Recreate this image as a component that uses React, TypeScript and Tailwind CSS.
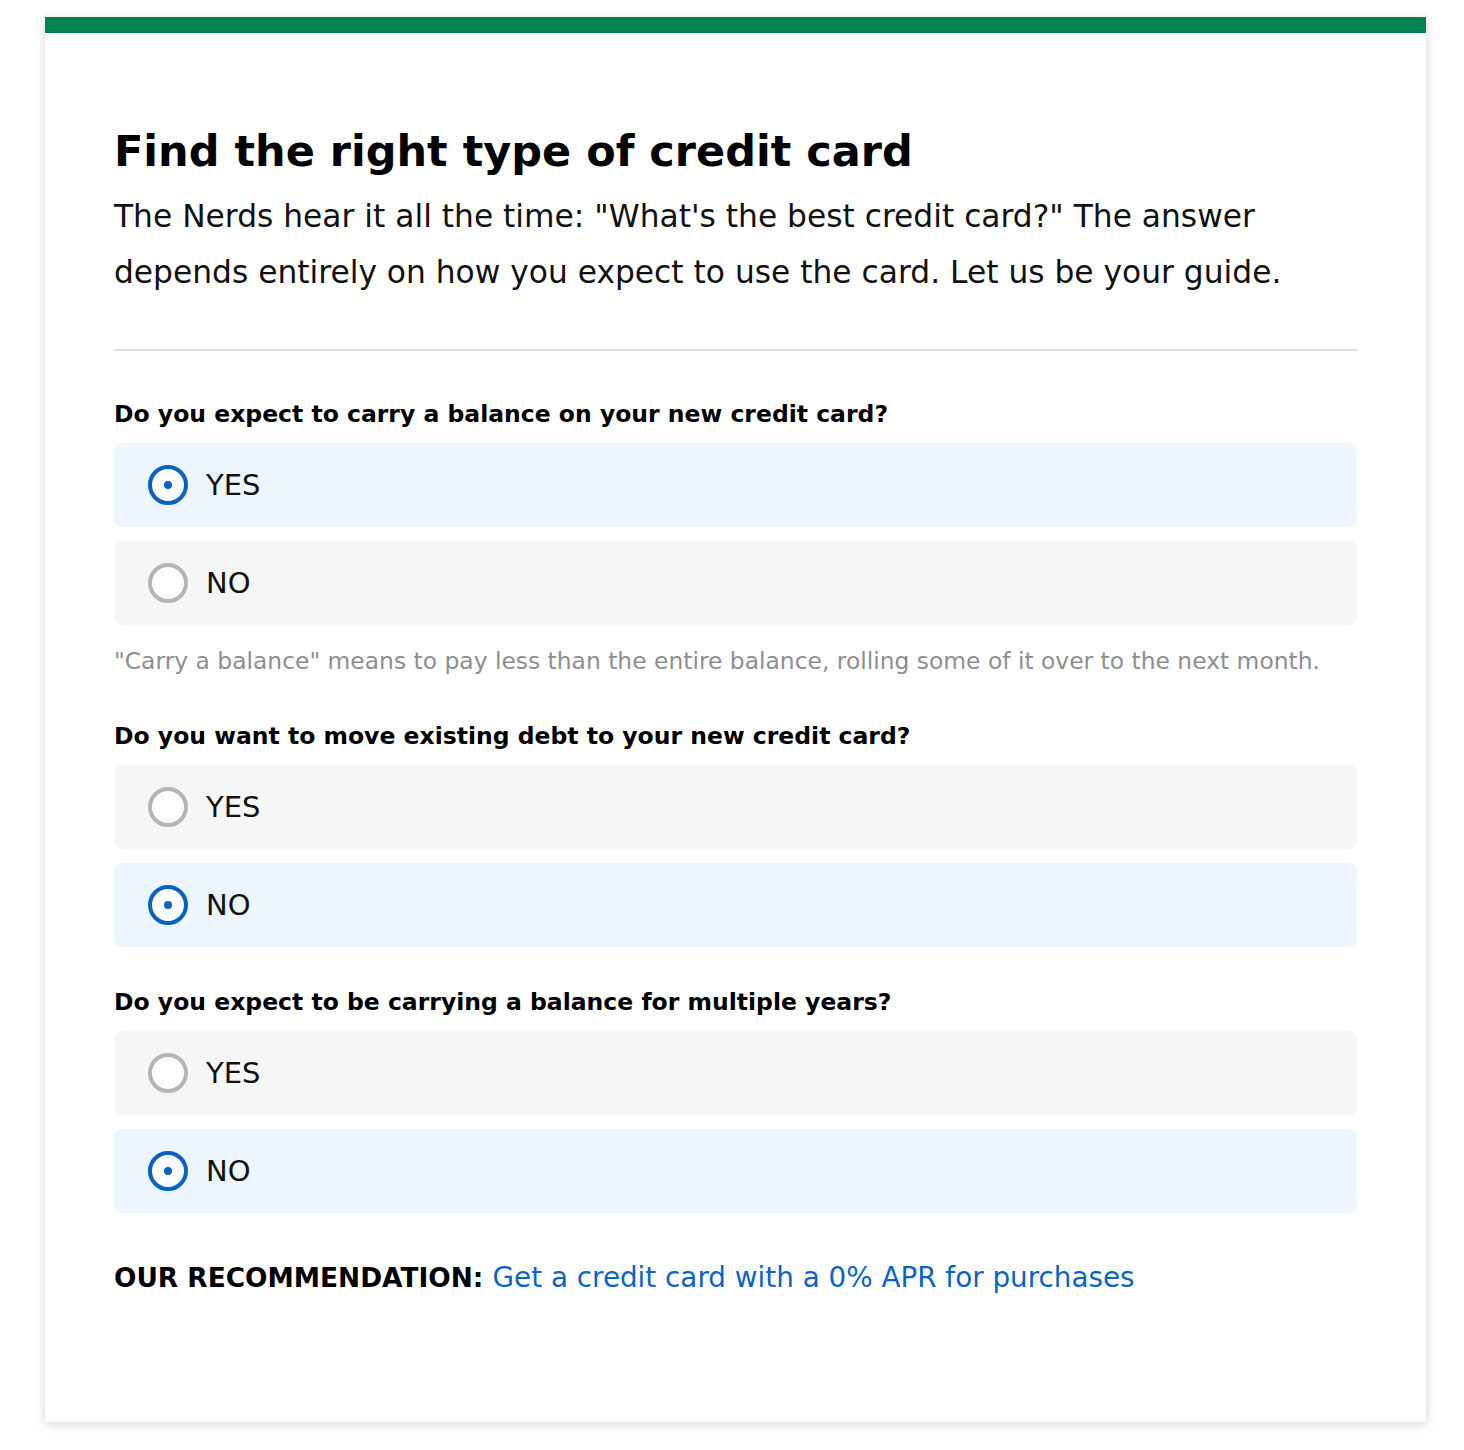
import React, { useState } from 'react';

const FONT = { fontFamily: '"DejaVu Sans", "Open Sans", Arial, sans-serif' };

type Question = { id: string; text: string; answer: 'yes' | 'no'; note?: string };

const QUESTIONS: Question[] = [
  {
    id: 'carry',
    text: 'Do you expect to carry a balance on your new credit card?',
    answer: 'yes',
    note: '"Carry a balance" means to pay less than the entire balance, rolling some of it over to the next month.',
  },
  { id: 'transfer', text: 'Do you want to move existing debt to your new credit card?', answer: 'no' },
  { id: 'years', text: 'Do you expect to be carrying a balance for multiple years?', answer: 'no' },
];

function Radio({ checked }: { checked: boolean }) {
  return (
    <span
      className={
        checked
          ? 'flex h-10 w-10 shrink-0 items-center justify-center rounded-full border-4 border-[#0862c4] bg-white'
          : 'flex h-10 w-10 shrink-0 items-center justify-center rounded-full border-4 border-[#b5b5b5] bg-white'
      }
    >
      {checked && <span className="h-2 w-2 rounded-full bg-[#0862c4]" />}
    </span>
  );
}

function Option({ label, checked, onClick }: { label: string; checked: boolean; onClick: () => void }) {
  return (
    <button
      type="button"
      onClick={onClick}
      className={
        checked
          ? 'flex h-[84px] w-full items-center gap-[18px] rounded-lg bg-[#edf5fe] pl-[34px] text-left'
          : 'flex h-[84px] w-full items-center gap-[18px] rounded-lg bg-[#f6f6f6] pl-[34px] text-left'
      }
    >
      <Radio checked={checked} />
      <span className="text-[29px] leading-8 text-[#111]">{label}</span>
    </button>
  );
}

export default function App() {
  const [answers, setAnswers] = useState<Record<string, 'yes' | 'no'>>(
    Object.fromEntries(QUESTIONS.map(q => [q.id, q.answer]))
  );

  return (
    <div className="min-h-screen bg-white pt-[17px] pb-[28px]" style={FONT}>
      <div className="ml-[45px] w-[1381px] bg-white shadow-[0_2px_10px_rgba(0,0,0,0.18)]">
        <div className="h-4 bg-[#038254]" />
        <div className="px-[69px] pt-[90px] pb-[128px]">
          <h2 className="text-[43px] font-bold leading-[56px] text-black">Find the right type of credit card</h2>
          <p className="mt-[9px] text-[31.3px] leading-[56px] text-[#111]">
            The Nerds hear it all the time: "What's the best credit card?" The answer depends entirely on how you
            expect to use the card. Let us be your guide.
          </p>
          <div className="mt-[49px] h-[2px] bg-[#dcdcdc]" />

          {QUESTIONS.map((q, i) => (
            <div key={q.id} className={i === 0 ? 'mt-[47px]' : i === 1 ? 'mt-[44px]' : 'mt-[39px]'}>
              <h3 className="text-[23.5px] font-bold leading-8 text-black">{q.text}</h3>
              <div className="mt-[13px] flex flex-col gap-[14px]">
                <Option label="YES" checked={answers[q.id] === 'yes'} onClick={() => setAnswers(a => ({ ...a, [q.id]: 'yes' }))} />
                <Option label="NO" checked={answers[q.id] === 'no'} onClick={() => setAnswers(a => ({ ...a, [q.id]: 'no' }))} />
              </div>
              {q.note && <p className="mt-[21px] text-[23.4px] leading-[30px] text-[#8e8e8e]">{q.note}</p>}
            </div>
          ))}

          <p className="mt-[49px] text-[27.8px] leading-8">
            <span className="text-[26.4px] font-bold text-black">OUR RECOMMENDATION: </span>
            <a href="#" className="text-[#0a64c4]">Get a credit card with a 0% APR for purchases</a>
          </p>
        </div>
      </div>
    </div>
  );
}
